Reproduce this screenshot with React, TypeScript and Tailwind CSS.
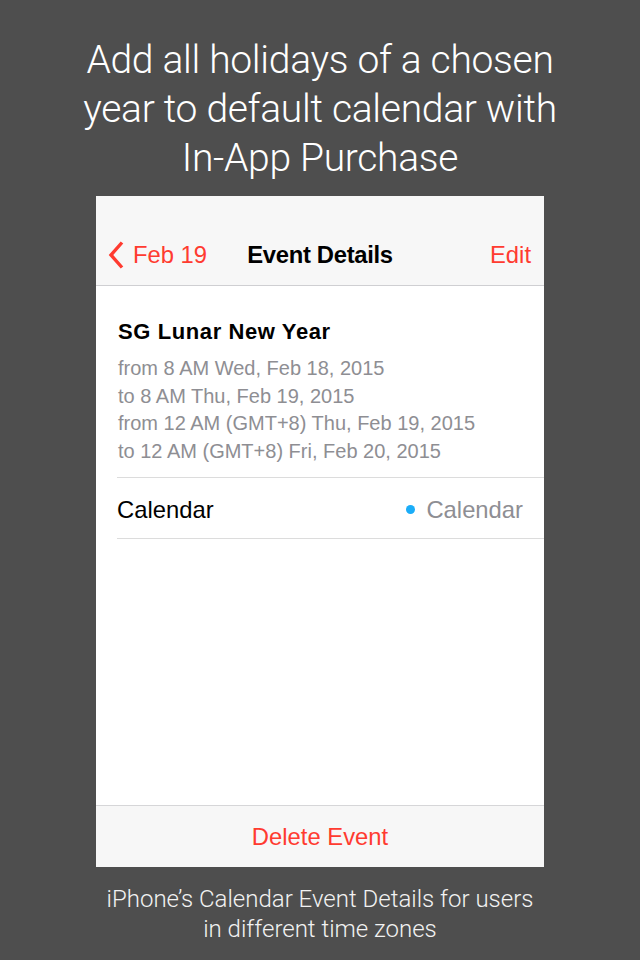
import React from "react";

export default function App() {
  const sans = { fontFamily: '"Liberation Sans", Arial, sans-serif' };
  const light = { fontFamily: 'Roboto, "Liberation Sans", sans-serif' };
  return (
    <div className="w-[640px] h-[960px] bg-[#4e4e4e] flex flex-col items-center overflow-hidden">
      <div
        className="pt-[36px] text-[39px] leading-[49px] font-light text-white text-center tracking-[-0.3px]"
        style={light}
      >
        <div>Add all holidays of a chosen</div>
        <div>year to default calendar with</div>
        <div>In-App Purchase</div>
      </div>

      <div className="mt-[13px] w-[448px] h-[671px] bg-white flex flex-col" style={sans}>
        <div className="h-[90px] bg-[#f7f7f7] border-b border-[#cfcfd2] flex flex-col">
          <div className="h-[29px]" />
          <div className="flex-1 relative flex items-center justify-center text-[23.8px]">
            <div className="absolute left-[12px] top-0 bottom-0 flex items-center gap-[9px] text-[#ff3b30]">
              <svg width="16" height="28" viewBox="0 0 16 28">
                <path d="M14 1.5 L3 14 L14 26.5" fill="none" stroke="#ff3b30" strokeWidth="3.4" strokeLinecap="butt" strokeLinejoin="miter" />
              </svg>
              <span>Feb 19</span>
            </div>
            <span className="font-bold text-black tracking-[-0.3px]">Event Details</span>
            <span className="absolute right-[13px] top-0 bottom-0 flex items-center text-[#ff3b30]">Edit</span>
          </div>
        </div>

        <div className="flex-1 flex flex-col">
          <div className="ml-[21px] pt-[32px] pb-[11px] border-b border-[#dcdcdc]">
            <div className="text-[22px] leading-[28px] font-bold text-black ml-[1px] tracking-[0.6px]">SG Lunar New Year</div>
            <div className="mt-[9px] text-[20px] leading-[27.7px] text-[#8e8e93] ml-[1px]">
              <div>from 8 AM Wed, Feb 18, 2015</div>
              <div>to 8 AM Thu, Feb 19, 2015</div>
              <div>from 12 AM (GMT+8) Thu, Feb 19, 2015</div>
              <div>to 12 AM (GMT+8) Fri, Feb 20, 2015</div>
            </div>
          </div>
          <div className="ml-[21px] h-[61px] border-b border-[#dcdcdc] flex items-center justify-between pr-[21px] text-[23.8px] pt-[4px]">
            <span className="text-black">Calendar</span>
            <span className="flex items-center gap-[11px] text-[#8e8e93]">
              <span className="w-[9px] h-[9px] rounded-full bg-[#1badf8]" />
              Calendar
            </span>
          </div>
        </div>

        <div className="h-[62px] bg-[#f7f7f7] border-t border-[#d6d6d8] flex items-center justify-center text-[23.8px] text-[#ff3b30]">
          Delete Event
        </div>
      </div>

      <div
        className="mt-[17px] text-[24px] leading-[30px] font-light text-[#f2f2f2] text-center"
        style={light}
      >
        <div>iPhone’s Calendar Event Details for users</div>
        <div>in different time zones</div>
      </div>
    </div>
  );
}
